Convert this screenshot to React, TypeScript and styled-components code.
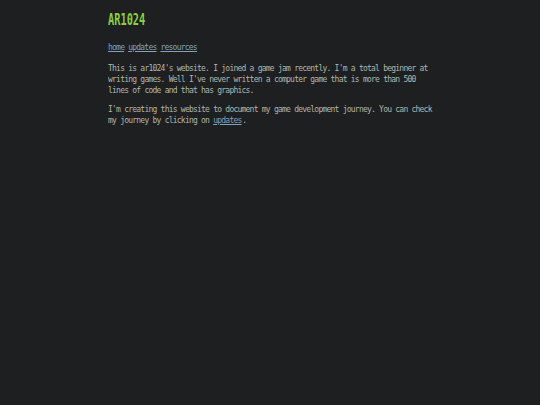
import styled, { createGlobalStyle } from 'styled-components';

const GlobalStyle = createGlobalStyle`
    html, body {
        margin: 0;
        padding: 0;
        background: #1d1f21;
    }
    body {
        min-height: 100vh;
        font-family: "DejaVu Sans Mono", "Liberation Mono", monospace;
    }
`;

const Page = styled.div`
    min-height: 100vh;
    padding-top: 10px;
    box-sizing: border-box;
`;

const Container = styled.main`
    width: 330px;
    margin: 0 auto;
    padding-left: 6px;
    color: #b0b7ad;
    font-size: 8px;
    line-height: 11px;
    letter-spacing: -0.77px;
`;

const Title = styled.h1`
    margin: 0 0 12px;
    font-size: 16px;
    line-height: 20px;
    letter-spacing: 0;
    font-weight: bold;
    color: #8bd13f;
    span {
        display: inline-block;
        transform: scaleX(0.645);
        transform-origin: left center;
    }
`;

const Nav = styled.nav`
    display: flex;
    gap: 3.2px;
    margin-bottom: 10px;
`;

// the trailing padding gives back the last letter's negative spacing
const NavLink = styled.a`
    color: #81a2be;
    text-decoration: underline;
    padding-right: 0.8px;
`;

const Paragraph = styled.p`
    margin: 0 0 8px;
`;

const links = ['home', 'updates', 'resources'];

const App = () => {
    return <>
        <GlobalStyle />
        <Page>
            <Container>
                <Title><span>AR1024</span></Title>
                <Nav>
                    {links.map(link => (
                        <NavLink key={link} href={`#${link}`}>{link}</NavLink>
                    ))}
                </Nav>
                <Paragraph>
                    This is ar1024's website. I joined a game jam recently. I'm a total beginner at
                    writing games. Well I've never written a computer game that is more than 500
                    lines of code and that has graphics.
                </Paragraph>
                <Paragraph>
                    I'm creating this website to document my game development journey. You can check
                    my journey by clicking on <NavLink href="#updates">updates</NavLink>.
                </Paragraph>
            </Container>
        </Page>
    </>
}

export default App;
